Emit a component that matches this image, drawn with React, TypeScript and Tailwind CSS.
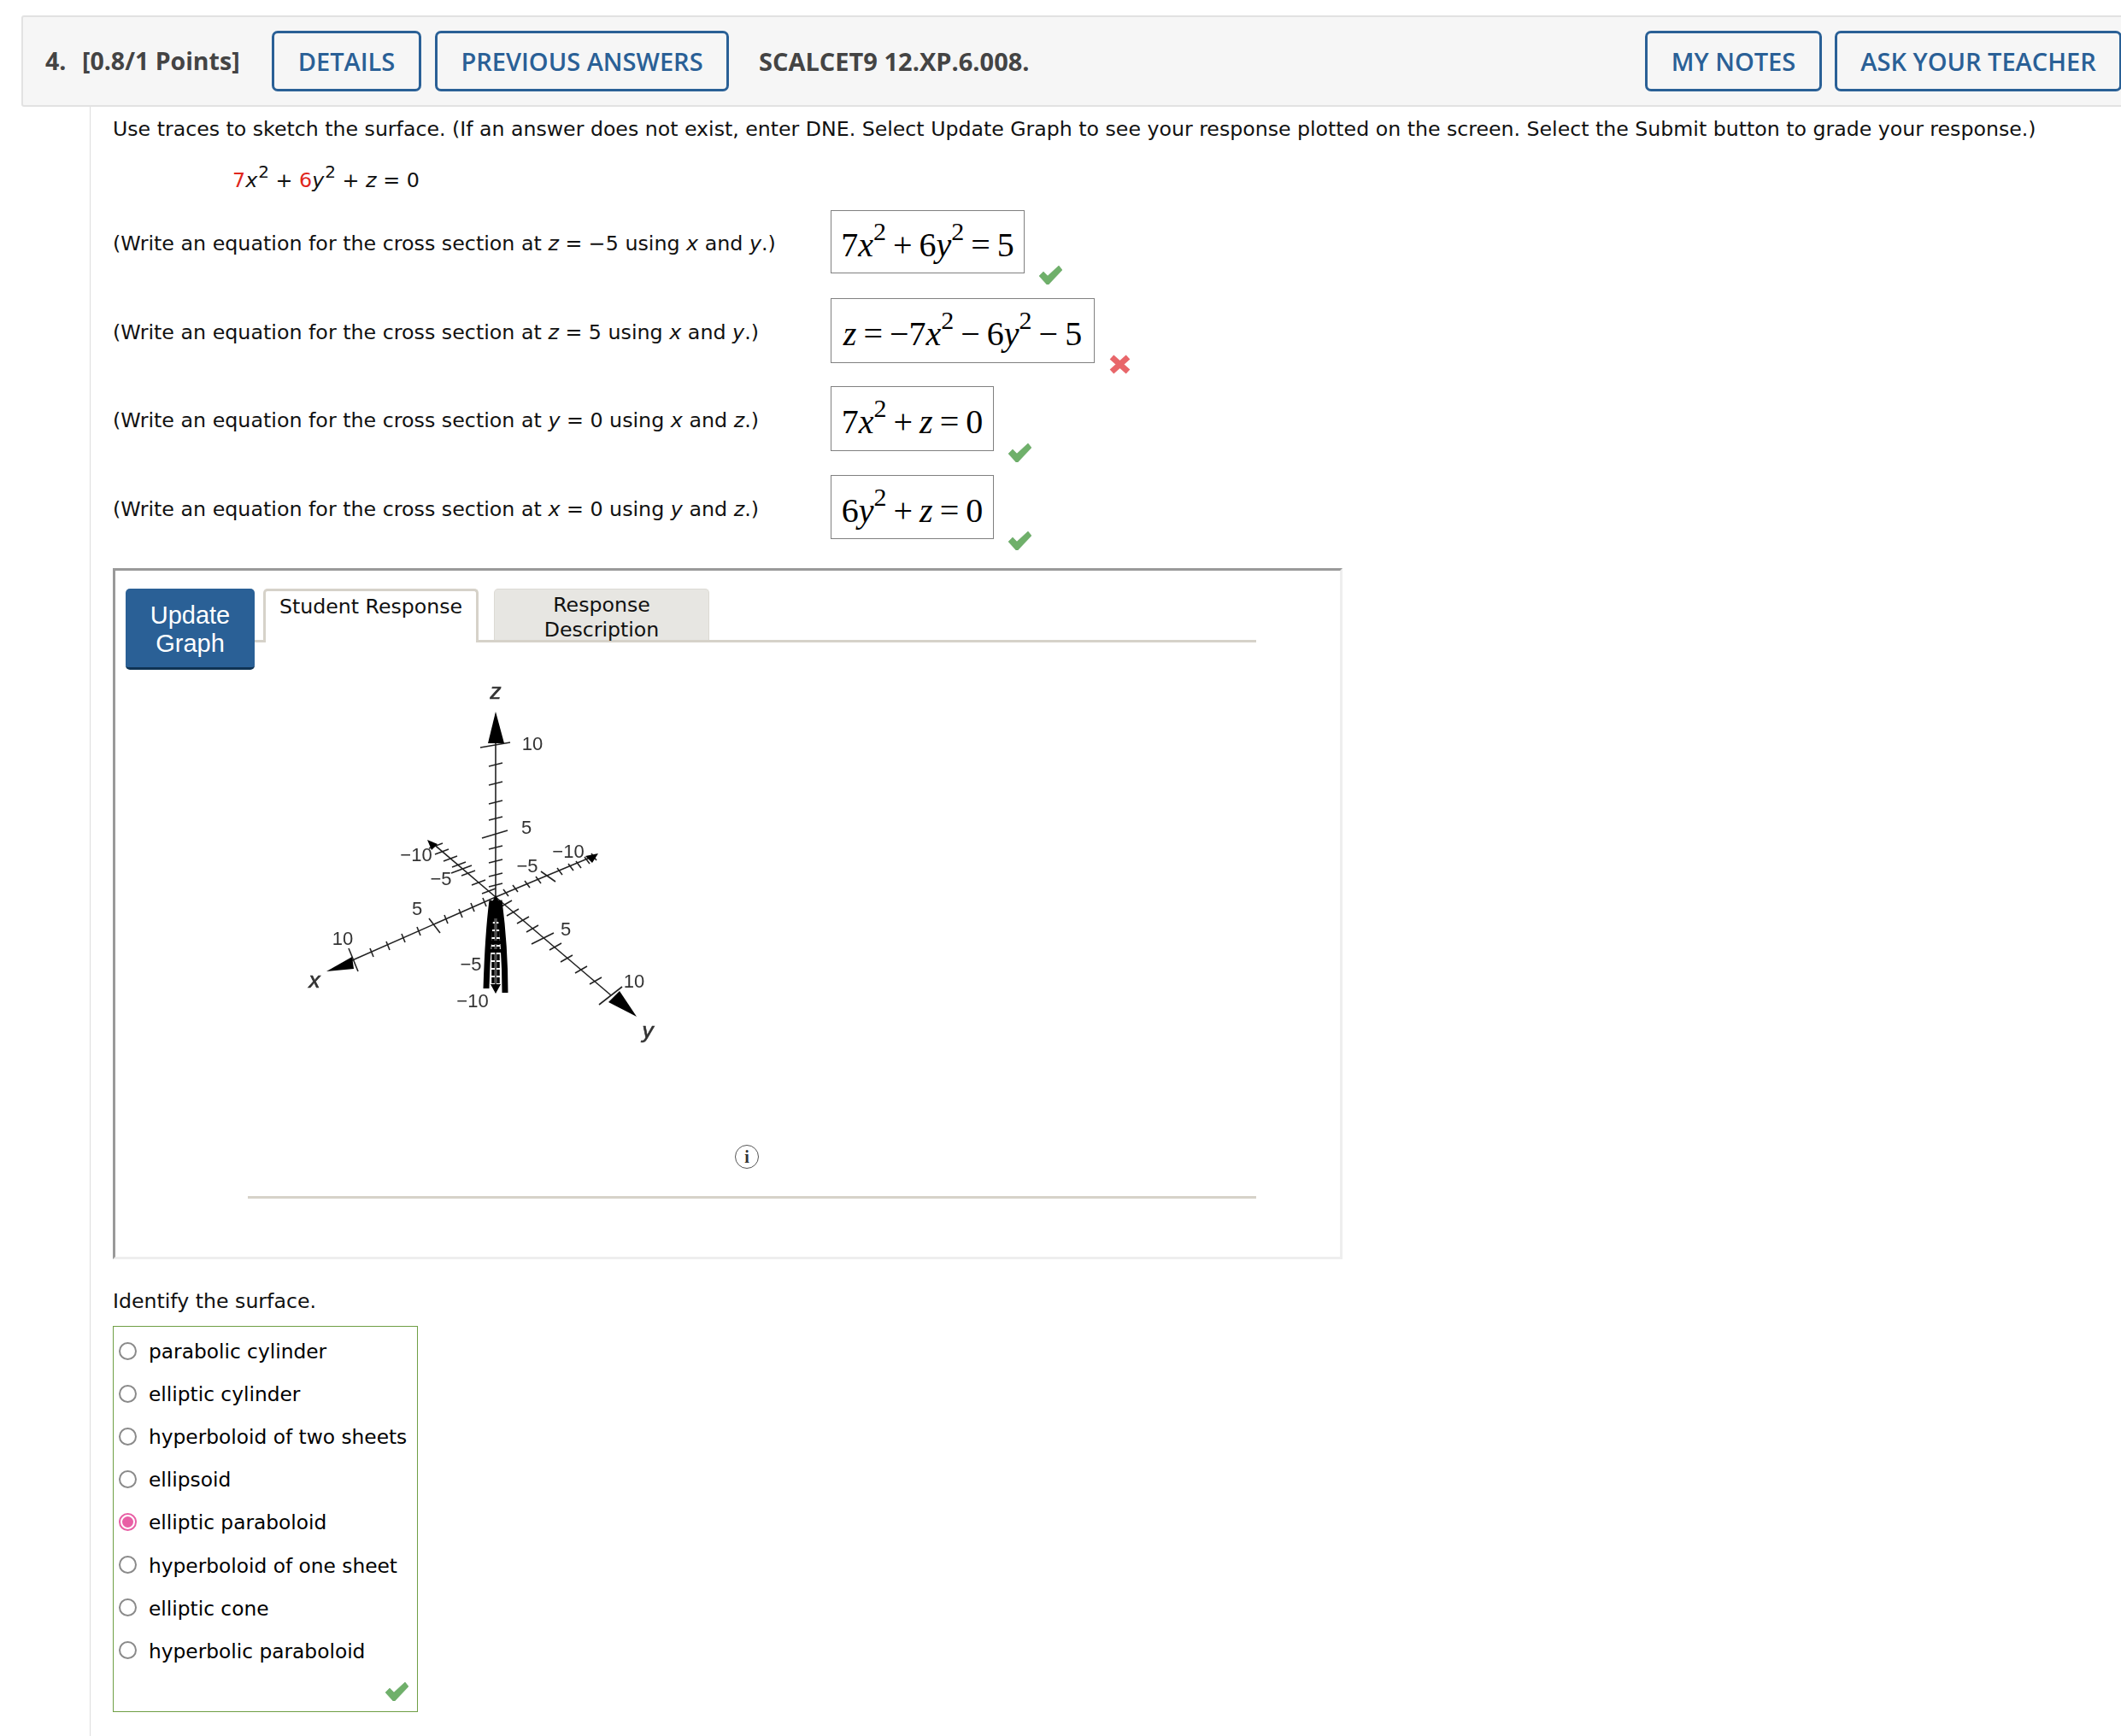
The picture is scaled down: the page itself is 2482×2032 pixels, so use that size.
type Pt = [number, number];

const zTicks = [115, 137, 159, 178, 212, 228, 244, 256];
const xTicks: Pt[] = [[95, 335], [114, 327], [132, 318], [150, 310], [182, 296], [199, 289], [213, 282], [227, 276]];
const negXTicks: Pt[] = [[232, 263], [220, 253], [208, 242], [197, 232], [187, 225], [177, 217], [170, 210]];
const yTicks: Pt[] = [[252, 278], [260, 288], [272, 297], [283, 307], [310, 328], [323, 342], [340, 355], [357, 368]];
const negYTicks: Pt[] = [[252, 265], [263, 260], [277, 255], [290, 250], [315, 240], [328, 235], [337, 232], [347, 227], [355, 223]];

const labels: { x: number; y: number; t: string; italic?: boolean }[] = [
  { x: 240, y: 38, t: "z", italic: true },
  { x: 283, y: 98, t: "10" },
  { x: 276, y: 196, t: "5" },
  { x: 147, y: 228, t: "−10" },
  { x: 176, y: 256, t: "−5" },
  { x: 148, y: 291, t: "5" },
  { x: 61, y: 326, t: "10" },
  { x: 28, y: 376, t: "x", italic: true },
  { x: 277, y: 241, t: "−5" },
  { x: 325, y: 224, t: "−10" },
  { x: 322, y: 315, t: "5" },
  { x: 402, y: 376, t: "10" },
  { x: 418, y: 435, t: "y", italic: true },
  { x: 211, y: 356, t: "−5" },
  { x: 213, y: 399, t: "−10" },
];

function Tick({ at, d }: { at: Pt; d: Pt }) {
  return <line x1={at[0] - d[0]} y1={at[1] - d[1]} x2={at[0] + d[0]} y2={at[1] + d[1]} />;
}

function Graph() {
  return (
    <svg width="460" height="460" viewBox="0 0 460 460" className="block blur-[0.5px]">
      <g stroke="#222" strokeWidth="1.6" fill="none">
        <line x1="240" y1="60" x2="240" y2="380" />
        <line x1="240" y1="270" x2="70" y2="345" />
        <line x1="240" y1="270" x2="165" y2="206" />
        <line x1="240" y1="270" x2="375" y2="385" />
        <line x1="240" y1="270" x2="350" y2="224" />
        <line x1="222" y1="95" x2="257" y2="89" />
        <line x1="224" y1="201" x2="254" y2="192" />
        <line x1="68" y1="330" x2="79" y2="357" />
        <line x1="162" y1="295" x2="175" y2="312" />
        <line x1="188" y1="242" x2="212" y2="233" />
        <line x1="282" y1="325" x2="308" y2="312" />
        <line x1="361" y1="396" x2="388" y2="375" />
        <line x1="293" y1="240" x2="310" y2="252" />
        {zTicks.map((y) => (
          <Tick key={y} at={[240, y]} d={[8, -2]} />
        ))}
        {xTicks.map((p) => (
          <Tick key={p[0]} at={p} d={[2, 5]} />
        ))}
        {negXTicks.map((p) => (
          <Tick key={p[0]} at={p} d={[8, -3]} />
        ))}
        {yTicks.map((p) => (
          <Tick key={p[0]} at={p} d={[7, -4]} />
        ))}
        {negYTicks.map((p) => (
          <Tick key={p[0]} at={p} d={[3, 4]} />
        ))}
      </g>
      <g fill="#000">
        <polygon points="240,53 231,90 250,90" />
        <polygon points="42,357 72,340 74,354" />
        <polygon points="405,410 372,393 385,380" />
        <polygon points="160,203 172,208 165,215" />
        <polygon points="345,222 360,219 353,230" />
        <polygon points="240,383 234,372 246,372" />
        <path d="M240 268 C235 276 232 285 231 295 L249 295 C248 285 245 276 240 268 Z" />
      </g>
      <g fill="none" stroke="#000">
        <path d="M236 274 C232 305 230 345 229 377" strokeWidth="7" />
        <path d="M244 274 C248 305 251 345 251 382" strokeWidth="7" />
        <path d="M237 292 V372 M243 292 V372" strokeWidth="3.5" strokeDasharray="7 2" />
        <path d="M232 323 H248 M232 333 H248" strokeWidth="4" />
      </g>
      <g fill="#333" fontFamily="'Liberation Sans', sans-serif" textAnchor="middle">
        {labels.map((l) => (
          <text
            key={l.x + l.t}
            x={l.x}
            y={l.y}
            fontStyle={l.italic ? "italic" : "normal"}
            fontSize={l.italic ? 26 : 22}
            stroke={l.italic ? "#333" : "none"}
            strokeWidth={l.italic ? 0.7 : 0}
          >
            {l.t}
          </text>
        ))}
      </g>
    </svg>
  );
}

function Check() {
  return (
    <svg width="27" height="22" viewBox="0 0 27 22" className="block">
      <polygon points="0,12 5,7 10,12 23,0 27,5 11,22 9,22" fill="#6fb06a" stroke="#5f9f5c" strokeWidth="0.5" />
    </svg>
  );
}

function Cross() {
  return (
    <svg width="25" height="23" viewBox="0 0 25 23" className="block">
      <path d="M3 3 L22 20 M22 3 L3 20" stroke="#e8666a" strokeWidth="7" />
    </svg>
  );
}

function V({ children }: { children: string }) {
  return <i>{children}</i>;
}

function Two() {
  return <span className="text-[30px] align-[19px] leading-none">2</span>;
}

function Op({ children }: { children: string }) {
  return <span className="mx-[8px]">{children}</span>;
}

function AnswerRow({ prompt, width, height, mt, wrong, children }: { prompt: React.ReactNode; width: string; height: string; mt: string; wrong?: boolean; children: React.ReactNode }) {
  return (
    <div className={`flex ${mt}`}>
      <div className="w-[840px] flex items-center pt-[6px] text-[23.75px]">{prompt}</div>
      <div className={`${width} ${height} border border-[#808080] flex items-center justify-center pb-[3px] font-['Liberation_Serif',serif] text-[40px] leading-none whitespace-nowrap text-black`}>
        {children}
      </div>
      <div className="ml-[17px] self-end -mb-[13px]">{wrong ? <Cross /> : <Check />}</div>
    </div>
  );
}

const surfaces = [
  "parabolic cylinder",
  "elliptic cylinder",
  "hyperboloid of two sheets",
  "ellipsoid",
  "elliptic paraboloid",
  "hyperboloid of one sheet",
  "elliptic cone",
  "hyperbolic paraboloid",
];

function HeaderButton({ label, width }: { label: string; width: string }) {
  return (
    <button className={`${width} h-[71px] border-[3px] border-[#2a6096] rounded-[7px] text-[#2a6096] font-semibold text-[29px] whitespace-nowrap`}>
      {label}
    </button>
  );
}

export default function App() {
  return (
    <div className="w-[2482px] h-[2032px] overflow-hidden bg-white pt-[18px] font-['DejaVu_Sans',sans-serif] text-[23.65px] text-[#111111]">
      <div className="ml-[25px] w-[2460px] h-[107px] flex items-center bg-[#f6f6f6] border-2 border-[#e2e2e2] rounded-[3px] pl-[26px] font-['Open_Sans',sans-serif]">
        <span className="font-bold text-[28.5px] text-[#444] w-[43px]">4.</span>
        <span className="font-bold text-[28.5px] text-[#444] w-[222px] whitespace-nowrap">[0.8/1 Points]</span>
        <HeaderButton label="DETAILS" width="w-[175px]" />
        <div className="ml-[16px]">
          <HeaderButton label="PREVIOUS ANSWERS" width="w-[344px]" />
        </div>
        <span className="ml-[35px] font-bold text-[29px] text-[#444] whitespace-nowrap">SCALCET9 12.XP.6.008.</span>
        <div className="ml-auto flex gap-[15px]">
          <HeaderButton label="MY NOTES" width="w-[207px]" />
          <HeaderButton label="ASK YOUR TEACHER" width="w-[336px]" />
        </div>
      </div>

      <div className="ml-[105px] border-l border-[#dddddd] pl-[26px] h-[1907px]">
        <div className="h-[50px] flex items-center whitespace-nowrap pt-[4px]">
          Use traces to sketch the surface. (If an answer does not exist, enter DNE. Select Update Graph to see your response plotted on the screen. Select the Submit button to grade your response.)
        </div>
        <div className="mt-[15px] h-[40px] ml-[140px] flex items-center whitespace-nowrap text-[23.8px]">
          <span>
            <span className="text-[#e0261c]">7</span>
            <i>x</i>
            <span className="text-[20px] align-[11px] leading-none ml-[1px]">2</span> + <span className="text-[#e0261c]">6</span>
            <i>y</i>
            <span className="text-[20px] align-[11px] leading-none ml-[1px]">2</span> + <i>z</i> = 0
          </span>
        </div>

        <AnswerRow
          mt="mt-[16px]"
          width="w-[227px]"
          height="h-[74px]"
          prompt={<span>(Write an equation for the cross section at <i>z</i> = −5 using <i>x</i> and <i>y</i>.)</span>}
        >
          <span>7<V>x</V><Two /><Op>+</Op>6<V>y</V><Two /><Op>=</Op>5</span>
        </AnswerRow>
        <AnswerRow
          mt="mt-[29px]"
          width="w-[309px]"
          height="h-[76px]"
          wrong
          prompt={<span>(Write an equation for the cross section at <i>z</i> = 5 using <i>x</i> and <i>y</i>.)</span>}
        >
          <span><V>z</V><Op>=</Op>−7<V>x</V><Two /><Op>−</Op>6<V>y</V><Two /><Op>−</Op>5</span>
        </AnswerRow>
        <AnswerRow
          mt="mt-[27px]"
          width="w-[191px]"
          height="h-[76px]"
          prompt={<span>(Write an equation for the cross section at <i>y</i> = 0 using <i>x</i> and <i>z</i>.)</span>}
        >
          <span>7<V>x</V><Two /><Op>+</Op><V>z</V><Op>=</Op>0</span>
        </AnswerRow>
        <AnswerRow
          mt="mt-[28px]"
          width="w-[191px]"
          height="h-[75px]"
          prompt={<span>(Write an equation for the cross section at <i>x</i> = 0 using <i>y</i> and <i>z</i>.)</span>}
        >
          <span>6<V>y</V><Two /><Op>+</Op><V>z</V><Op>=</Op>0</span>
        </AnswerRow>

        <div className="mt-[34px] w-[1439px] h-[809px] border-[3px] border-t-[#999999] border-l-[#999999] border-r-[#eeeeee] border-b-[#eeeeee] pt-[21px]">
          <div className="flex items-start pl-[12px]">
            <button className="w-[151px] h-[95px] bg-[#2a6096] border-b-[3px] border-[#0f3354] rounded-[5px] pt-[3px] text-white font-['Liberation_Sans',sans-serif] text-[29px] leading-[33px] shrink-0">
              Update
              <br />
              Graph
            </button>
            <div className="w-[1172px] h-[63px] border-b-[3px] border-[#d6d2c9] pl-[10px] flex items-start">
              <div className="w-[252px] h-[63px] bg-white border-[3px] border-b-0 border-[#d6d2c9] rounded-t-[5px] text-center pt-[2px] leading-[32px]">
                Student Response
              </div>
              <div className="ml-[18px] w-[252px] h-[60px] bg-[#e7e6e2] border border-b-0 border-[#dcdad4] rounded-t-[5px] text-center leading-[29px] pt-[4px]">
                Response
                <br />
                Description
              </div>
            </div>
          </div>
          <div className="-mt-[4px] ml-[205px]">
            <Graph />
          </div>
          <div className="mt-[100px] ml-[725px] w-[28px] h-[28px] rounded-full border border-[#555555] flex items-center justify-center font-['Liberation_Serif',serif] font-bold text-[20px] leading-none text-[#333]">
            i
          </div>
          <div className="mt-[32px] ml-[155px] w-[1180px] h-[3px] bg-[#d6d2c9]" />
        </div>

        <div className="mt-[29px] h-[40px] flex items-center pt-[2px]">Identify the surface.</div>
        <div className="mt-[9px] w-[357px] h-[452px] border border-[#6f9f45] pt-[3px] text-[23.3px]">
          {surfaces.map((s) => (
            <div key={s} className="h-[50.1px] flex items-center pl-[6px] whitespace-nowrap text-black">
              {s === "elliptic paraboloid" ? (
                <span className="w-[21px] h-[21px] rounded-full border-2 border-[#e85fa5] flex items-center justify-center">
                  <span className="w-[13px] h-[13px] rounded-full bg-[#e85fa5]" />
                </span>
              ) : (
                <span className="w-[21px] h-[21px] rounded-full border-2 border-[#8a8a8a] bg-white" />
              )}
              <span className="ml-[14px] mt-[3px]">{s}</span>
            </div>
          ))}
          <div className="mt-[12px] flex justify-end pr-[10px]">
            <Check />
          </div>
        </div>
      </div>
    </div>
  );
}
